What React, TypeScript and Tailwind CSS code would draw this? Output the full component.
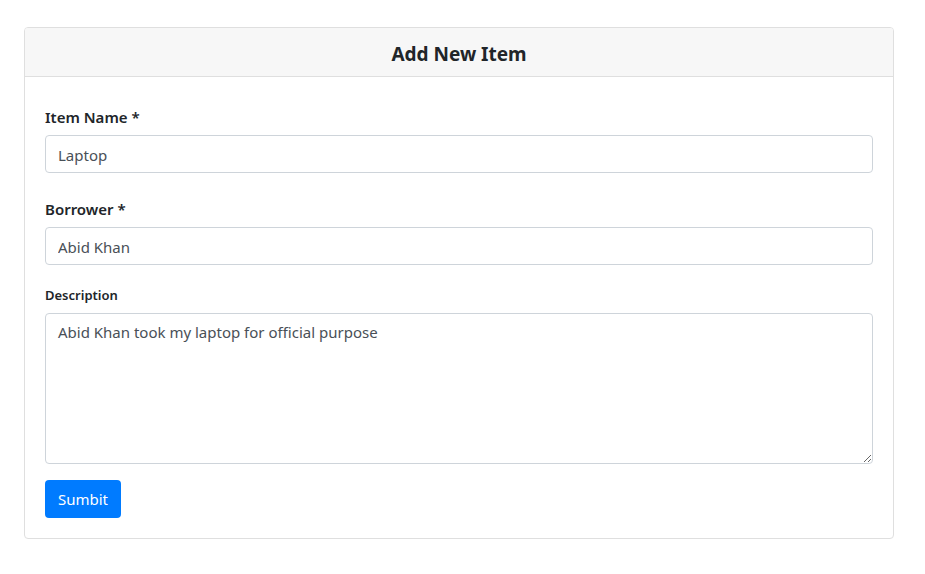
export default function App() {
  const font = { fontFamily: '"Segoe UI", "Noto Sans", "Open Sans", sans-serif' };
  return (
    <div className="min-h-[574px] bg-white pt-[27px] pl-[24px] pr-[31px]" style={font}>
      <div className="w-[870px] border border-[#dfdfdf] rounded-[4px] overflow-hidden">
        <div className="h-[49px] pt-[5px] bg-[#f7f7f7] border-b border-[#dfdfdf] flex items-center justify-center">
          <h2 className="text-[19px] font-bold text-[#212529]">Add New Item</h2>
        </div>
        <div className="px-[20px] pt-[28px] pb-[20px]">
          <label className="block text-[15px] leading-6 font-semibold text-[#212529] mb-[6px]">Item Name *</label>
          <input
            defaultValue="Laptop"
            className="block w-full h-[38px] px-[12px] pt-[2px] border border-[#ced4da] rounded-[4px] text-[15px] text-[#495057] outline-none"
          />
          <label className="block text-[15px] leading-6 font-semibold text-[#212529] mt-[24px] mb-[6px]">Borrower *</label>
          <input
            defaultValue="Abid Khan"
            className="block w-full h-[38px] px-[12px] pt-[2px] border border-[#ced4da] rounded-[4px] text-[15px] text-[#495057] outline-none"
          />
          <label className="block text-[13px] leading-6 font-semibold text-[#212529] mt-[18px] mb-[6px]">Description</label>
          <textarea
            defaultValue="Abid Khan took my laptop for official purpose"
            className="block w-full h-[151px] px-[12px] py-[6px] border border-[#ced4da] rounded-[4px] text-[15px] leading-6 text-[#495057] outline-none resize-y"
          />
          <button className="mt-[16px] h-[38px] w-[76px] bg-[#007bff] text-white text-[15px] rounded-[4px]">Sumbit</button>
        </div>
      </div>
    </div>
  );
}
